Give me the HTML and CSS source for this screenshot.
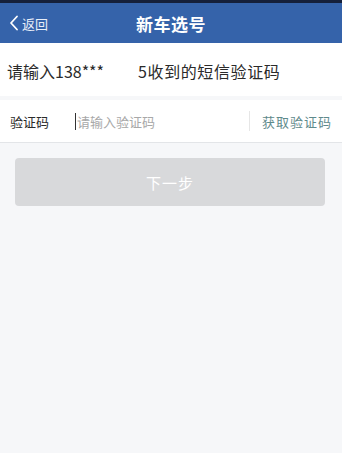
FILE: index.html
```html
<!DOCTYPE html>
<html lang="zh">
<head>
<meta charset="utf-8">
<link rel="stylesheet" href="styles.css">
</head>
<body>
<div class="statusbar"></div>
<header class="navbar">
  <div class="back">
    <svg class="chev" width="10" height="16" viewBox="0 0 10 16"><path d="M8 1.5 L2 8 L8 14.5" fill="none" stroke="#fff" stroke-width="1.8" stroke-linecap="round" stroke-linejoin="round"/></svg>
    <span>返回</span>
  </div>
  <div class="title">新车选号</div>
</header>
<section class="hint">
  <span>请输入138***</span><span class="mask"></span><span class="rest">5收到的短信验证码</span>
</section>
<section class="field">
  <span class="label">验证码</span>
  <div class="input"><span class="caret"></span><span class="ph">请输入验证码</span></div>
  <span class="divider"></span>
  <span class="get">获取验证码</span>
</section>
<div class="actions">
  <button class="next">下一步</button>
</div>
</body>
</html>
```
FILE: styles.css
```css
html, body {
  margin: 0;
  padding: 0;
}
body {
  width: 342px;
  height: 453px;
  background: #f6f7f9;
  font-family: "Noto Sans CJK SC", "Noto Sans", sans-serif;
  overflow: hidden;
}
.statusbar {
  height: 3px;
  background: #15203a;
}
.navbar {
  height: 40px;
  background: #3563aa;
  display: flex;
  align-items: center;
  justify-content: center;
  position: relative;
  color: #fff;
}
.back {
  position: absolute;
  left: 9px;
  top: 0;
  height: 40px;
  display: flex;
  align-items: center;
  gap: 3px;
  font-size: 13px;
  color: #e8eef8;
}
.title {
  font-size: 17px;
  font-weight: 700;
  letter-spacing: 0.5px;
}
.hint {
  height: 53px;
  background: #fff;
  display: flex;
  align-items: center;
  padding-left: 7px;
  font-size: 16px;
  color: #2a2a2a;
  margin-bottom: 4px;
  padding-top: 3px;
  box-sizing: border-box;
}
.mask {
  display: inline-block;
  width: 34px;
}
.rest {
  letter-spacing: 0.6px;
}
.field {
  height: 42px;
  background: #fff;
  border-bottom: 1px solid #e3e5e8;
  display: flex;
  align-items: center;
  padding: 0 10px;
  font-size: 13px;
}
.label {
  width: 65px;
  color: #2a2a2a;
}
.input {
  flex: 1;
  display: flex;
  align-items: center;
}
.caret {
  width: 1px;
  height: 17px;
  background: #333;
  margin-right: 1px;
}
.ph {
  color: #a8a8a8;
}
.divider {
  width: 1px;
  height: 20px;
  background: #e6e6e6;
  margin-right: 12px;
}
.get {
  color: #5f8a8c;
  font-size: 13px;
  letter-spacing: 1px;
}
.actions {
  padding: 15px 17px 0 15px;
}
.next {
  display: block;
  width: 100%;
  height: 48px;
  border: none;
  border-radius: 4px;
  background: #d8d9db;
  color: #fff;
  font-family: "Noto Sans CJK SC", "Noto Sans", sans-serif;
  font-size: 15px;
  letter-spacing: 1px;
}
```
